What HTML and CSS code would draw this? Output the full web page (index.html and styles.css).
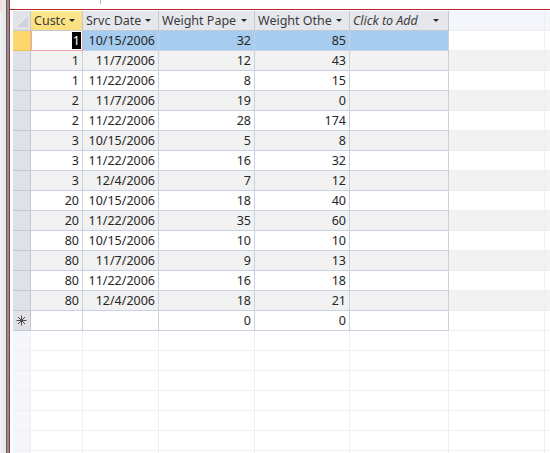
FILE: index.html
```html
<!DOCTYPE html>
<html>
<head>
<meta charset="utf-8">
<link rel="stylesheet" href="styles.css">
</head>
<body>
<div class="app">
  <div class="leftbar"><div class="lb a"></div><div class="lb b"></div><div class="lb c"></div><div class="lb d"></div><div class="lb e"></div></div>
  <div class="main">
    <div class="topband"><span class="tick"></span></div>
    <div class="sheet">
      <div class="grid">
        <div class="row head">
          <div class="cell sel corner"><svg width="17" height="19" viewBox="0 0 17 19"><polygon points="3,16 15,4 15,16" fill="#cfd2d8"/><line x1="3" y1="16" x2="15" y2="4" stroke="#f4f5f7" stroke-width="1"/></svg></div>
          <div class="cell hcell active"><span class="lbl">CustomerID</span><span class="arr"></span></div>
          <div class="cell hcell"><span class="lbl">Srvc Date</span><span class="arr"></span></div>
          <div class="cell hcell"><span class="lbl">Weight Paper</span><span class="arr"></span></div>
          <div class="cell hcell"><span class="lbl">Weight Other</span><span class="arr"></span></div>
          <div class="cell hcell add"><span class="lbl">Click to Add</span><span class="arr"></span></div>
          <div class="cell out hout"></div>
          <div class="cell out hout last"></div>
        </div>
        <div class="row current">
          <div class="cell sel selcur"></div>
          <div class="cell num focus"><span class="hl">1</span></div>
          <div class="cell num">10/15/2006</div>
          <div class="cell num">32</div>
          <div class="cell num">85</div>
          <div class="cell"></div>
          <div class="cell out"></div><div class="cell out last"></div>
        </div>
        <div class="row alt">
          <div class="cell sel"></div><div class="cell num">1</div><div class="cell num">11/7/2006</div><div class="cell num">12</div><div class="cell num">43</div><div class="cell"></div><div class="cell out"></div><div class="cell out last"></div>
        </div>
        <div class="row">
          <div class="cell sel"></div><div class="cell num">1</div><div class="cell num">11/22/2006</div><div class="cell num">8</div><div class="cell num">15</div><div class="cell"></div><div class="cell out"></div><div class="cell out last"></div>
        </div>
        <div class="row alt">
          <div class="cell sel"></div><div class="cell num">2</div><div class="cell num">11/7/2006</div><div class="cell num">19</div><div class="cell num">0</div><div class="cell"></div><div class="cell out"></div><div class="cell out last"></div>
        </div>
        <div class="row">
          <div class="cell sel"></div><div class="cell num">2</div><div class="cell num">11/22/2006</div><div class="cell num">28</div><div class="cell num">174</div><div class="cell"></div><div class="cell out"></div><div class="cell out last"></div>
        </div>
        <div class="row alt">
          <div class="cell sel"></div><div class="cell num">3</div><div class="cell num">10/15/2006</div><div class="cell num">5</div><div class="cell num">8</div><div class="cell"></div><div class="cell out"></div><div class="cell out last"></div>
        </div>
        <div class="row">
          <div class="cell sel"></div><div class="cell num">3</div><div class="cell num">11/22/2006</div><div class="cell num">16</div><div class="cell num">32</div><div class="cell"></div><div class="cell out"></div><div class="cell out last"></div>
        </div>
        <div class="row alt">
          <div class="cell sel"></div><div class="cell num">3</div><div class="cell num">12/4/2006</div><div class="cell num">7</div><div class="cell num">12</div><div class="cell"></div><div class="cell out"></div><div class="cell out last"></div>
        </div>
        <div class="row">
          <div class="cell sel"></div><div class="cell num">20</div><div class="cell num">10/15/2006</div><div class="cell num">18</div><div class="cell num">40</div><div class="cell"></div><div class="cell out"></div><div class="cell out last"></div>
        </div>
        <div class="row alt">
          <div class="cell sel"></div><div class="cell num">20</div><div class="cell num">11/22/2006</div><div class="cell num">35</div><div class="cell num">60</div><div class="cell"></div><div class="cell out"></div><div class="cell out last"></div>
        </div>
        <div class="row">
          <div class="cell sel"></div><div class="cell num">80</div><div class="cell num">10/15/2006</div><div class="cell num">10</div><div class="cell num">10</div><div class="cell"></div><div class="cell out"></div><div class="cell out last"></div>
        </div>
        <div class="row alt">
          <div class="cell sel"></div><div class="cell num">80</div><div class="cell num">11/7/2006</div><div class="cell num">9</div><div class="cell num">13</div><div class="cell"></div><div class="cell out"></div><div class="cell out last"></div>
        </div>
        <div class="row">
          <div class="cell sel"></div><div class="cell num">80</div><div class="cell num">11/22/2006</div><div class="cell num">16</div><div class="cell num">18</div><div class="cell"></div><div class="cell out"></div><div class="cell out last"></div>
        </div>
        <div class="row alt">
          <div class="cell sel"></div><div class="cell num">80</div><div class="cell num">12/4/2006</div><div class="cell num">18</div><div class="cell num">21</div><div class="cell"></div><div class="cell out"></div><div class="cell out last"></div>
        </div>
        <div class="row">
          <div class="cell sel star"><svg width="11" height="11" viewBox="0 0 11 11"><g stroke="#4a4a4a" stroke-width="1" fill="none"><line x1="5.5" y1="0.5" x2="5.5" y2="10.5"/><line x1="0.5" y1="5.5" x2="10.5" y2="5.5"/><line x1="2" y1="2" x2="9" y2="9"/><line x1="9" y1="2" x2="2" y2="9"/></g></svg></div><div class="cell"></div><div class="cell"></div><div class="cell num">0</div><div class="cell num">0</div><div class="cell"></div><div class="cell out"></div><div class="cell out last"></div>
        </div>
        <div class="row empty"><div class="cell esel"></div><div class="cell out"></div><div class="cell out"></div><div class="cell out"></div><div class="cell out"></div><div class="cell out"></div><div class="cell out"></div><div class="cell out last"></div></div>
        <div class="row empty"><div class="cell esel"></div><div class="cell out"></div><div class="cell out"></div><div class="cell out"></div><div class="cell out"></div><div class="cell out"></div><div class="cell out"></div><div class="cell out last"></div></div>
        <div class="row empty"><div class="cell esel"></div><div class="cell out"></div><div class="cell out"></div><div class="cell out"></div><div class="cell out"></div><div class="cell out"></div><div class="cell out"></div><div class="cell out last"></div></div>
        <div class="row empty"><div class="cell esel"></div><div class="cell out"></div><div class="cell out"></div><div class="cell out"></div><div class="cell out"></div><div class="cell out"></div><div class="cell out"></div><div class="cell out last"></div></div>
        <div class="row empty"><div class="cell esel"></div><div class="cell out"></div><div class="cell out"></div><div class="cell out"></div><div class="cell out"></div><div class="cell out"></div><div class="cell out"></div><div class="cell out last"></div></div>
        <div class="row empty"><div class="cell esel"></div><div class="cell out"></div><div class="cell out"></div><div class="cell out"></div><div class="cell out"></div><div class="cell out"></div><div class="cell out"></div><div class="cell out last"></div></div>
        <div class="row empty"><div class="cell esel"></div><div class="cell out"></div><div class="cell out"></div><div class="cell out"></div><div class="cell out"></div><div class="cell out"></div><div class="cell out"></div><div class="cell out last"></div></div>
      </div>
    </div>
  </div>
</div>
</body>
</html>
```
FILE: styles.css
```css
html, body {
  margin: 0;
  padding: 0;
  background: #ffffff;
  overflow: hidden;
}
body {
  width: 550px;
  height: 453px;
  font-family: "Noto Sans", "Open Sans", sans-serif;
  font-size: 12.5px;
  color: #262626;
}
.app {
  display: flex;
  height: 453px;
}
.leftbar {
  display: flex;
  flex: 0 0 10px;
}
.lb { height: 100%; }
.lb.a { width: 2px; background: linear-gradient(#f6dede 0, #f6dede 12px, #f1f1f1 12px); }
.lb.b { width: 4px; background: #e9e9eb; }
.lb.c { width: 1px; background: #5f5f5f; }
.lb.d { width: 2px; background: #8f8f8f; }
.lb.e { width: 1px; background: #a83434; }
.main {
  flex: 1;
  display: flex;
  flex-direction: column;
  min-width: 0;
}
.topband {
  height: 9px;
  position: relative;
}
.tick {
  position: absolute;
  left: 90px;
  top: 0;
  width: 1px;
  height: 4px;
  background: #b9b9b9;
}
.sheet {
  border-top: 1px solid #b3292b;
  padding: 1px 0 0 3px;
  flex: 1;
  overflow: hidden;
}
.row {
  display: grid;
  grid-template-columns: 18px 52px 76px 96px 95px 99px 96px 1fr;
  height: 20px;
}
.cell {
  box-sizing: border-box;
  height: 20px;
  border-right: 1px solid #c9d2e1;
  border-bottom: 1px solid #c9d2e1;
  white-space: nowrap;
  overflow: hidden;
  line-height: 19px;
  padding: 0 3px;
}
.row.alt .cell { background: #f2f2f2; }
.num { text-align: right; padding-right: 3px; }
.sel {
  background: #dfe1e6;
  border-color: #c3c8d1;
  padding: 0;
}
.row.alt .cell.sel { background: #dfe1e6; }
.corner {
  background: #e1e3e8;
  display: flex;
  align-items: flex-end;
}
.corner svg { display: block; }
.hcell {
  background: #e5e7ec;
  border-color: #c3c8d1;
  display: flex;
  align-items: center;
  color: #3b3b3b;
  padding: 0 7px 0 3px;
}
.hcell .lbl {
  flex: 1;
  overflow: hidden;
  white-space: nowrap;
  min-width: 0;
  margin-right: 4px;
}
.hcell .arr {
  flex: 0 0 auto;
  width: 0;
  height: 0;
  border-left: 3px solid transparent;
  border-right: 3px solid transparent;
  border-top: 3px solid #2a2a2a;
}
.hcell.active {
  background: linear-gradient(#fde68f, #fcdf7c);
}
.hcell.add .lbl { font-style: italic; }
.hcell.add { padding-right: 9px; }
.cell.out {
  border-color: #eeeff3;
  background: #ffffff;
}
.hout {
  background: #f5f6fb !important;
}
.cell.last { border-right: none; }
.row.current .cell { background: #a6ccf0; }
.row.current .cell.sel.selcur { background: #fcd76b; border-color: #e7c560; }
.row.current .cell.focus {
  background: #ffffff;
  border: 1px solid #f3a3aa;
  border-top: none;
  padding-right: 1px;
}
.row.current .cell.out { background: #ffffff; }
.hl {
  background: #000000;
  color: #ffffff;
  padding: 0 1px;
}
.star {
  display: flex;
  align-items: center;
  justify-content: center;
  background: #dfe1e6;
}
.star svg { display: block; }
.esel {
  background: #f6f6fd;
  border-color: #eeeff3;
}
```
